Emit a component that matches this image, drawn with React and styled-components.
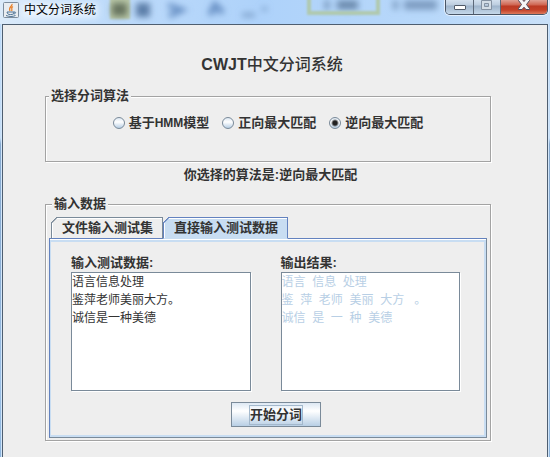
import React, { useState } from "react";
import styled, { createGlobalStyle } from "styled-components";

const GlobalStyle = createGlobalStyle`
  *, *::before, *::after {
    box-sizing: border-box;
  }

  body {
    margin: 0;
    color: #333333;
    font-family: "Liberation Sans", "Noto Sans CJK SC", sans-serif;
    font-size: 13px;
    line-height: 18px;
  }

  button, input, textarea {
    font: inherit;
    color: inherit;
  }
`;

const Window = styled.div`
  display: flex;
  flex-direction: column;
  min-height: 100vh;
  padding: 0 2px;
  background: linear-gradient(
    #b9d9fa 0,
    #c6def7 138px,
    #86a9cf 144px,
    #8db0d6 280px,
    #9cc0e6 380px,
    #8db5dd 100%
  );
`;

const TitleBar = styled.header`
  position: relative;
  display: flex;
  align-items: flex-start;
  height: 24px;
  margin: 0 -2px;
  padding-left: 3px;
  background: linear-gradient(90deg, #dcebfa 0, #c0dcfa 90px, #aed2fa 260px, #b8d8fa 430px, #c9e0f8 100%);
`;

/* shapes of the window behind, seen through the glass */
const Glass = styled.svg`
  position: absolute;
  inset: 0;
  width: 100%;
  height: 24px;
`;

const AppIcon = styled.svg`
  position: relative;
  flex: none;
  width: 16px;
  height: 16px;
  margin-top: 2px;
`;

const Caption = styled.span`
  position: relative;
  flex: 1;
  margin-left: 5px;
  color: #000000;
  font-size: 12px;
  line-height: 20px;
`;

const Controls = styled.div`
  position: relative;
  display: flex;
  height: 15px;
  margin-right: 2px;
  border: 1px solid #4a5666;
  border-top: 0;
  border-radius: 0 0 5px 5px;
  box-shadow: 0 0 0 1px rgba(255, 255, 255, 0.6);
  overflow: hidden;
`;

const ControlButton = styled.button`
  display: flex;
  justify-content: center;
  width: ${(props) => (props.$close ? "47px" : "27px")};
  height: 14px;
  padding: 0;
  border: 0;
  border-left: ${(props) => (props.$first ? "0" : "1px solid #5c6878")};
  background: ${(props) =>
    props.$close
      ? "linear-gradient(#dfa093 0, #cf6450 5px, #bb3a24 6px, #c44128 10px, #dd7a5c 100%)"
      : "linear-gradient(#d3e0ee 0, #bccddf 5px, #9fb4cb 6px, #c5d8ea 100%)"};
`;

const Content = styled.main`
  flex: 1;
  padding: 26px 56px 15px 42px;
  border: 1px solid #4e5e70;
  border-bottom: 0;
  background: #eeeeee;
  box-shadow: 0 0 0 1px #d2e6fa;
`;

const Heading = styled.h1`
  margin: 0 0 8px;
  padding-left: 8px;
  font-size: 16px;
  line-height: 28px;
  font-weight: 500;
  text-align: center;
`;

const Group = styled.fieldset`
  min-width: 0;
  margin: 0;
  padding: ${(props) => props.$padding};
  border: 1px solid #a3a3a3;
  box-shadow: 1px 1px 0 #ffffff, inset 1px 1px 0 #ffffff;
`;

const Legend = styled.legend`
  margin-left: 3px;
  padding: 0 2px;
  background: #eeeeee;
  font-weight: bold;
  line-height: 18px;
`;

const RadioRow = styled.div`
  display: flex;
  justify-content: center;
  gap: 13px;
`;

const RadioLabel = styled.label`
  display: flex;
  align-items: center;
  gap: 4px;
  font-weight: bold;
  white-space: nowrap;
`;

const Latin = styled.span`
  font-size: 12px;
`;

const Radio = styled.input`
  appearance: none;
  width: 12px;
  height: 12px;
  margin: 0;
  border: 1px solid #7a8a99;
  border-radius: 50%;
  background: linear-gradient(#dde8f3 0, #ffffff 4px, #b8cfe5 100%);

  &:checked {
    background: radial-gradient(circle, #222222 0, #222222 2px, transparent 4px),
      linear-gradient(#dde8f3 0, #ffffff 4px, #b8cfe5 100%);
  }
`;

const Status = styled.p`
  margin: 4px 0 11px;
  padding-left: 5px;
  font-weight: bold;
  text-align: center;
`;

const TabList = styled.div`
  display: flex;
  align-items: flex-end;
  padding-left: 2px;
`;

const Tab = styled.button`
  position: relative;
  z-index: 1;
  height: 22px;
  margin-bottom: -1px;
  padding: 0 9px 0 10px;
  border: 1px solid ${(props) => (props.$active ? "#6382bf" : "#7a8a99")};
  border-bottom-color: ${(props) => (props.$active ? "#c8ddf2" : "#6382bf")};
  background: ${(props) => (props.$active ? "#c8ddf2" : "#eeeeee")};
  box-shadow: inset 1px 1px 0 #ffffff;
  font-weight: bold;
  line-height: 18px;
  white-space: nowrap;

  /* cut corner */
  &::before {
    content: "";
    position: absolute;
    top: -1px;
    left: -1px;
    width: 6px;
    height: 6px;
    background: linear-gradient(
      135deg,
      #eeeeee 0,
      #eeeeee 45%,
      ${(props) => (props.$active ? "#6382bf" : "#7a8a99")} 46%,
      ${(props) => (props.$active ? "#6382bf" : "#7a8a99")} 58%,
      transparent 59%
    );
  }
`;

const TabPanel = styled.div`
  padding: 12px 26px 6px 21px;
  border: 1px solid #6382bf;
  border-right-color: #7a8a99;
  border-bottom-color: #7a8a99;
  box-shadow: inset 0 1px 0 #ffffff, inset 1px 0 0 #c8ddf2, inset 0 3px 0 #c8ddf2,
    inset -2px -2px 0 #c8ddf2;
`;

const Fields = styled.div`
  display: grid;
  grid-template-columns: 1fr 1fr;
  gap: 30px;
`;

const Field = styled.div`
  display: flex;
  flex-direction: column;

  label {
    padding-top: 3px;
    font-weight: bold;
  }
`;

const TextBox = styled.textarea`
  display: block;
  width: 100%;
  height: 119px;
  padding: 0;
  border: 1px solid #7a8a99;
  border-radius: 0;
  outline: 0;
  resize: none;
  background: #ffffff;
  box-shadow: 1px 1px 0 #ffffff;
  font-size: 12px;
  line-height: 18px;
  color: ${(props) => (props.disabled ? "#b8cfe5" : "#333333")};
`;

const Actions = styled.div`
  display: flex;
  justify-content: center;
  padding: 11px 0 4px 21px;
`;

const StartButton = styled.button`
  display: flex;
  align-items: center;
  justify-content: center;
  width: 90px;
  height: 25px;
  padding: 0;
  border: 1px solid #7a8a99;
  background: linear-gradient(#dde8f3 0, #ffffff 8px, #b8cfe5 100%);
  font-weight: bold;

  span {
    border: 1px solid #a3b8cc;
    line-height: 18px;
  }
`;

const algorithms = [
  { id: "hmm", name: "基于HMM模型", label: <span>基于<Latin>HMM</Latin>模型</span> },
  { id: "forward", name: "正向最大匹配" },
  { id: "backward", name: "逆向最大匹配" },
];

const tabs = ["文件输入测试集", "直接输入测试数据"];

const output = "语言  信息  处理\n鉴  萍  老师  美丽  大方   。\n诚信  是  一  种  美德";

const App = () => {
  const [algorithm, setAlgorithm] = useState("backward");
  const [tab, setTab] = useState(1);
  const [text, setText] = useState("语言信息处理\n鉴萍老师美丽大方。\n诚信是一种美德");

  const current = algorithms.find((item) => item.id === algorithm);

  return (
    <>
      <GlobalStyle />
      <Window>
        <TitleBar>
          <Glass aria-hidden="true">
            <defs>
              <filter id="soft" x="-20%" y="-50%" width="140%" height="200%">
                <feGaussianBlur stdDeviation="3" />
              </filter>
              <filter id="edge" x="-20%" y="-50%" width="140%" height="200%">
                <feGaussianBlur stdDeviation="1" />
              </filter>
            </defs>
            <rect x="22" y="3" width="76" height="15" fill="#eef6fd" opacity="0.8" filter="url(#soft)" />
            <rect x="110" y="-4" width="20" height="23" fill="#b9c8a8" filter="url(#edge)" />
            <g filter="url(#soft)">
              <rect x="112" y="3" width="15" height="13" fill="#67745f" />
              <rect x="136" y="3" width="14" height="14" fill="#5d7fa9" />
              <path d="M168 5 L182 10 L169 16" fill="none" stroke="#6890c4" strokeWidth="5" />
              <path d="M210 15 L215 5 L223 13" fill="none" stroke="#6890c4" strokeWidth="6" />
              <path d="M242 15 H255 M262 9 H267" stroke="#7c9fc8" strokeWidth="4" />
              <path d="M325 5 H329 M337 5 H358" stroke="#6a89ac" strokeWidth="9" />
              <path d="M393 5 H398 M404 5 H437" stroke="#7a9abf" strokeWidth="9" />
            </g>
            <path
              d="M309 -4 V13 H378 V-4"
              fill="none"
              stroke="#b0c9ad"
              strokeWidth="4"
              filter="url(#edge)"
            />
          </Glass>
          <AppIcon viewBox="0 0 16 16" aria-hidden="true">
            <rect x="0.5" y="0.5" width="15" height="15" rx="1" fill="#e9edf1" stroke="#7d8d9d" />
            <path d="M9 2 C10 4 5 5 7 9 M10 4.5 C7 6 10 7 8.500 9" fill="none" stroke="#e8822d" strokeWidth="1.300" />
            <path d="M4 10 H11 C11 12 10 12.500 7.500 12.500 C5 12.500 4.500 12 4 10 M11 10 C13.500 9.500 13 12 10.500 12 M3 13.500 C6 14.800 10 14.800 12.500 13.500" fill="none" stroke="#4d7396" />
          </AppIcon>
          <Caption>中文分词系统</Caption>
          <Controls>
            <ControlButton type="button" aria-label="最小化" $first>
              <svg width="14" height="14" viewBox="0 0 14 14">
                <rect x="1.500" y="5.500" width="11" height="4" rx="0.5" fill="#ffffff" stroke="#505a68" />
              </svg>
            </ControlButton>
            <ControlButton type="button" aria-label="最大化">
              <svg width="14" height="14" viewBox="0 0 14 14">
                <path d="M1.500 0.500 H11.500 V9.500 H1.500 Z M4.500 3.500 V6.500 H8.500 V3.500 Z" fill="#d4dde6" fillRule="evenodd" stroke="#8592a2" />
              </svg>
            </ControlButton>
            <ControlButton type="button" aria-label="关闭" $close>
              <svg width="14" height="14" viewBox="0 0 14 14">
                <path d="M1.500 -1 H5 L7 1.500 L9 -1 H12.500 V0.500 L9.500 4.500 L12.500 8.500 V9.500 H9 L7 7.200 L5 9.500 H1.500 V8.500 L4.500 4.500 L1.500 0.500 Z" fill="#f4f4f6" stroke="#50485a" />
              </svg>
            </ControlButton>
          </Controls>
        </TitleBar>

        <Content>
          <Heading>
            <b>CWJT</b>中文分词系统
          </Heading>

          <Group $padding="9px 0 29px">
            <Legend>选择分词算法</Legend>
            <RadioRow>
              {algorithms.map((item) => (
                <RadioLabel key={item.id}>
                  <Radio
                    type="radio"
                    name="algorithm"
                    value={item.id}
                    checked={algorithm === item.id}
                    onChange={() => setAlgorithm(item.id)}
                  />
                  {item.label || item.name}
                </RadioLabel>
              ))}
            </RadioRow>
          </Group>

          <Status>你选择的算法是:{current.name}</Status>

          <Group $padding="4px 3px 2px">
            <Legend>输入数据</Legend>
            <TabList role="tablist">
              {tabs.map((name, index) => (
                <Tab
                  key={name}
                  type="button"
                  role="tab"
                  aria-selected={tab === index}
                  $active={tab === index}
                  onClick={() => setTab(index)}
                >
                  {name}
                </Tab>
              ))}
            </TabList>
            <TabPanel role="tabpanel">
              <Fields>
                <Field>
                  <label htmlFor="source">输入测试数据:</label>
                  <TextBox id="source" value={text} onChange={(e) => setText(e.target.value)} />
                </Field>
                <Field>
                  <label htmlFor="result">输出结果:</label>
                  <TextBox id="result" value={output} disabled readOnly />
                </Field>
              </Fields>
              <Actions>
                <StartButton type="button">
                  <span>开始分词</span>
                </StartButton>
              </Actions>
            </TabPanel>
          </Group>
        </Content>
      </Window>
    </>
  );
};

export default App;
